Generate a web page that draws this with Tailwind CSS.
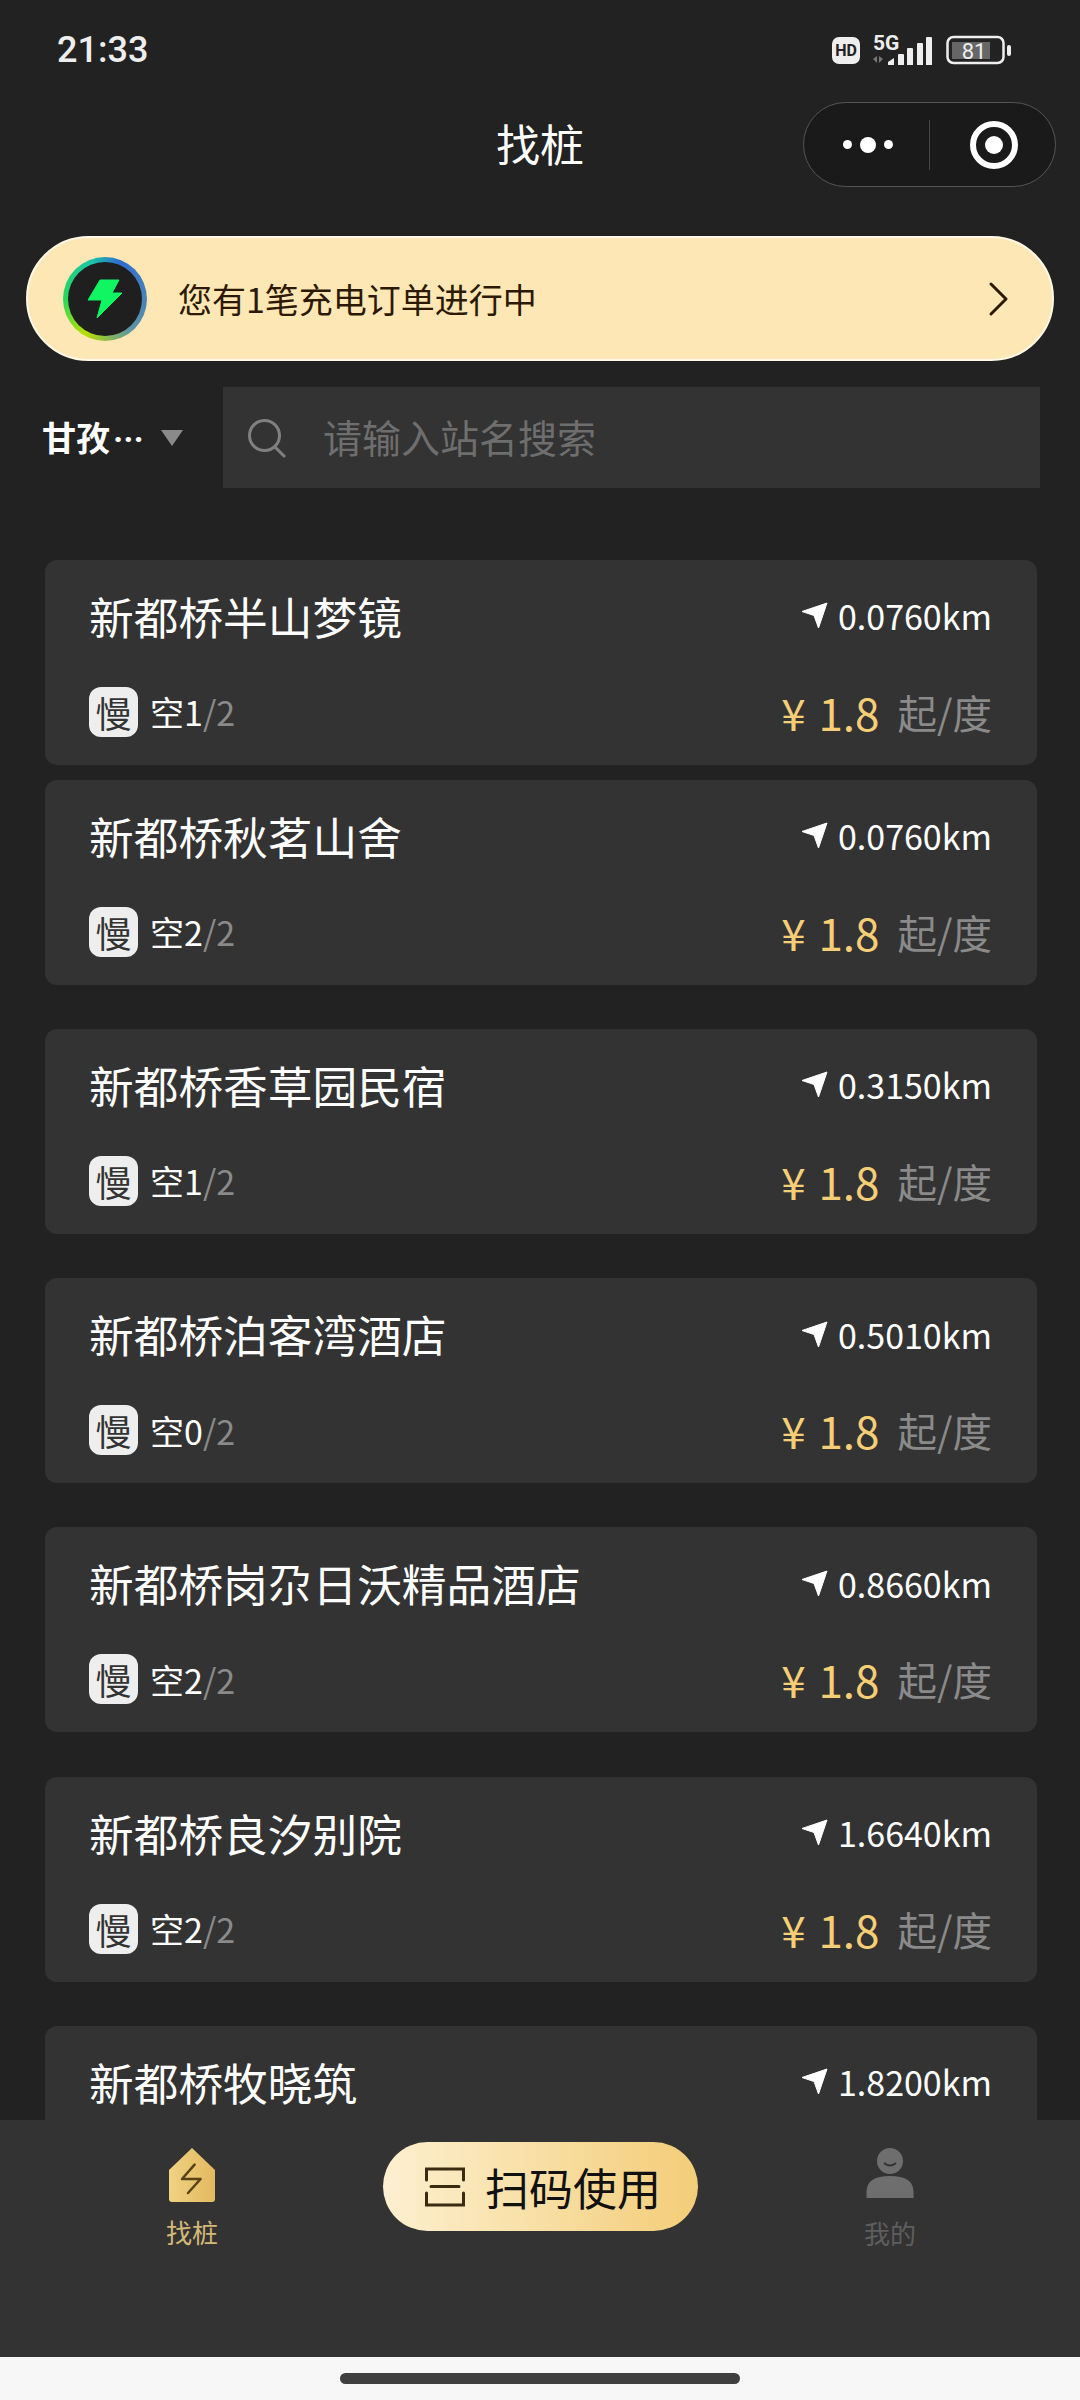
<!DOCTYPE html>
<html lang="zh">
<head>
<meta charset="utf-8">
<script src="https://cdn.jsdelivr.net/npm/@tailwindcss/browser@4"></script>
</head>
<body class="m-0">
<div class="relative w-[1080px] h-[2400px] overflow-hidden bg-[#222222] font-['Noto_Sans_CJK_SC','Noto_Sans',sans-serif] text-white">

  <!-- status bar -->
  <div class="h-[100px] flex items-start justify-between pl-[57px] pr-[68px] pt-[26px]">
    <span class="font-['Roboto'] font-medium text-[36px] leading-[48px] text-[#eeeeee]">21:33</span>
    <div class="flex items-start gap-[13px] pt-[9px]">
      <div class="mt-[2px] w-[28px] h-[27px] rounded-[7px] bg-[#eeeeee] text-[#222222] font-['Roboto'] font-bold text-[16px] leading-[27px] text-center">HD</div>
      <svg class="-mt-[6px]" width="60" height="38" viewBox="0 -6 60 38">
        <text x="0" y="15" font-family="Roboto" font-weight="700" font-size="21" fill="#eeeeee">5G</text>
        <path d="M0 24l4-3v7zM10 24l-4-3v7z" fill="#777777"/>
        <path d="M15 27l6-4v7h-6zM25 20q0-1 1-1h4q1 0 1 1v10h-6zM34 14q0-1 1-1h4q1 0 1 1v16h-6zM44 9q0-1 1-1h4q1 0 1 1v21h-6zM53 3q0-1 1-1h4q1 0 1 1v27h-6z" fill="#eeeeee"/>
      </svg>
      <svg width="66" height="30" viewBox="0 0 66 30">
        <rect x="1.500" y="2" width="56" height="26" rx="6" fill="none" stroke="#eeeeee" stroke-width="2.500"/>
        <rect x="6" y="7" width="38" height="17" fill="#666666"/>
        <rect x="61" y="10" width="4" height="11" rx="2" fill="#eeeeee"/>
        <text x="28" y="23.500" text-anchor="middle" font-family="Roboto" font-size="22" fill="#eeeeee">81</text>
      </svg>
    </div>
  </div>

  <!-- title bar -->
  <div class="relative h-[88px] flex items-center justify-center">
    <span class="text-[44px] leading-[60px] -translate-y-[1px]">找桩</span>
    <div class="absolute left-[803px] top-[2px] w-[253px] h-[85px] rounded-full border border-[#555555] bg-[#1a1a1a] flex items-center">
      <div class="w-[125px] h-full flex items-center justify-center gap-[8px] pl-[3px]">
        <span class="w-[9px] h-[9px] rounded-full bg-white"></span>
        <span class="w-[16px] h-[16px] rounded-full bg-white"></span>
        <span class="w-[9px] h-[9px] rounded-full bg-white"></span>
      </div>
      <div class="w-px h-[50px] bg-[#444444]"></div>
      <div class="flex-1 flex items-center justify-center pl-[2px]">
        <div class="w-[48px] h-[48px] rounded-full border-[6px] border-white flex items-center justify-center">
          <div class="w-[18px] h-[18px] rounded-full bg-white"></div>
        </div>
      </div>
    </div>
  </div>

  <!-- order banner -->
  <div class="mt-[48px] mx-[26px] h-[125px] rounded-full bg-[#fde7b4] border-[2px] border-[#fff8e6] flex items-center pl-[35px] pr-[42px]">
    <div class="w-[84px] h-[84px] rounded-full p-[5px] bg-[conic-gradient(from_20deg,#2f6fd0,#5c93a8_120deg,#b8e000_190deg,#27d85a_250deg,#1cc6a8_320deg,#2f6fd0)] shrink-0">
      <div class="w-full h-full rounded-full bg-[#1f1f1f] flex items-center justify-center">
        <svg width="36" height="40" viewBox="0 0 36 40"><path d="M13 1h19l-7 13h10L10 39l5-18H1z" fill="#10f562" stroke="#10f562" stroke-width="1" stroke-linejoin="round"/></svg>
      </div>
    </div>
    <span class="ml-[31px] text-[34px] leading-[48px] text-[#2d1a05]">您有1笔充电订单进行中</span>
    <svg class="ml-auto" width="22" height="36" viewBox="0 0 22 36"><path d="M3 3l15 15L3 33" fill="none" stroke="#2d1a05" stroke-width="3" stroke-linecap="round" stroke-linejoin="round"/></svg>
  </div>

  <!-- search row -->
  <div class="mt-[26px] pl-[42px] pr-[40px] flex items-center h-[101px]">
    <div class="w-[181px] flex items-center whitespace-nowrap">
      <span class="text-[34px] leading-[50px] font-bold">甘孜<span class="font-['Roboto'] ml-[3px]">···</span></span>
      <svg class="ml-[16px]" width="24" height="18" viewBox="0 0 24 18"><path d="M1 1h22L12 17z" fill="#8a8a8a"/></svg>
    </div>
    <div class="flex-1 h-full bg-[#333333] flex items-center pl-[24px]">
      <svg width="40" height="40" viewBox="0 0 40 40"><circle cx="17.500" cy="17.500" r="15" fill="none" stroke="#808080" stroke-width="3"/><path d="M28 29l9 9" stroke="#808080" stroke-width="3" stroke-linecap="round"/></svg>
      <span class="ml-[36px] text-[39px] leading-[54px] text-[#6e6e6e] -translate-y-[2px]">请输入站名搜索</span>
    </div>
  </div>

  <!-- station list -->
  <div class="mt-[71.500px] ml-[45px] mr-[43px] flex flex-col gap-[44.300px]">
    <div class="flex flex-col gap-[15px]">
      <div class="h-[205px] rounded-[12px] bg-[#333333] pl-[44px] pr-[45px] pt-[25px] flex flex-col">
        <div class="flex items-center justify-between h-[62px]">
          <span class="text-[44.700px] leading-[62px] text-white">新都桥半山梦镜</span>
          <div class="flex items-center gap-[10px] text-[34px]"><svg width="27" height="27" viewBox="0 0 27 27"><path d="M26 1L1 9.500L13 13.500L17.500 26z" fill="#ffffff" stroke="#ffffff" stroke-width="1" stroke-linejoin="round"/></svg><span>0.0760km</span></div>
        </div>
        <div class="mt-[39px] flex items-center h-[52px]">
          <span class="w-[49px] h-[50px] rounded-[12px] bg-[#eeeeee] text-[#333333] text-[36px] leading-[50px] text-center">慢</span>
          <span class="ml-[12px] text-[34px]">空1<span class="text-[#8a8a8a]">/2</span></span>
          <span class="ml-auto text-[44px] leading-[52px] text-[#f6ce76] [word-spacing:3px]">¥ 1.8</span>
          <span class="ml-[18px] text-[39.500px] leading-[52px] text-[#8a8a8a]">起/度</span>
        </div>
      </div>
      <div class="h-[205px] rounded-[12px] bg-[#333333] pl-[44px] pr-[45px] pt-[25px] flex flex-col">
        <div class="flex items-center justify-between h-[62px]">
          <span class="text-[44.700px] leading-[62px] text-white">新都桥秋茗山舍</span>
          <div class="flex items-center gap-[10px] text-[34px]"><svg width="27" height="27" viewBox="0 0 27 27"><path d="M26 1L1 9.500L13 13.500L17.500 26z" fill="#ffffff" stroke="#ffffff" stroke-width="1" stroke-linejoin="round"/></svg><span>0.0760km</span></div>
        </div>
        <div class="mt-[39px] flex items-center h-[52px]">
          <span class="w-[49px] h-[50px] rounded-[12px] bg-[#eeeeee] text-[#333333] text-[36px] leading-[50px] text-center">慢</span>
          <span class="ml-[12px] text-[34px]">空2<span class="text-[#8a8a8a]">/2</span></span>
          <span class="ml-auto text-[44px] leading-[52px] text-[#f6ce76] [word-spacing:3px]">¥ 1.8</span>
          <span class="ml-[18px] text-[39.500px] leading-[52px] text-[#8a8a8a]">起/度</span>
        </div>
      </div>
    </div>
    <div class="h-[205px] rounded-[12px] bg-[#333333] pl-[44px] pr-[45px] pt-[25px] flex flex-col">
      <div class="flex items-center justify-between h-[62px]">
        <span class="text-[44.700px] leading-[62px] text-white">新都桥香草园民宿</span>
        <div class="flex items-center gap-[10px] text-[34px]"><svg width="27" height="27" viewBox="0 0 27 27"><path d="M26 1L1 9.500L13 13.500L17.500 26z" fill="#ffffff" stroke="#ffffff" stroke-width="1" stroke-linejoin="round"/></svg><span>0.3150km</span></div>
      </div>
      <div class="mt-[39px] flex items-center h-[52px]">
        <span class="w-[49px] h-[50px] rounded-[12px] bg-[#eeeeee] text-[#333333] text-[36px] leading-[50px] text-center">慢</span>
        <span class="ml-[12px] text-[34px]">空1<span class="text-[#8a8a8a]">/2</span></span>
        <span class="ml-auto text-[44px] leading-[52px] text-[#f6ce76] [word-spacing:3px]">¥ 1.8</span>
        <span class="ml-[18px] text-[39.500px] leading-[52px] text-[#8a8a8a]">起/度</span>
      </div>
    </div>
    <div class="h-[205px] rounded-[12px] bg-[#333333] pl-[44px] pr-[45px] pt-[25px] flex flex-col">
      <div class="flex items-center justify-between h-[62px]">
        <span class="text-[44.700px] leading-[62px] text-white">新都桥泊客湾酒店</span>
        <div class="flex items-center gap-[10px] text-[34px]"><svg width="27" height="27" viewBox="0 0 27 27"><path d="M26 1L1 9.500L13 13.500L17.500 26z" fill="#ffffff" stroke="#ffffff" stroke-width="1" stroke-linejoin="round"/></svg><span>0.5010km</span></div>
      </div>
      <div class="mt-[39px] flex items-center h-[52px]">
        <span class="w-[49px] h-[50px] rounded-[12px] bg-[#eeeeee] text-[#333333] text-[36px] leading-[50px] text-center">慢</span>
        <span class="ml-[12px] text-[34px]">空0<span class="text-[#8a8a8a]">/2</span></span>
        <span class="ml-auto text-[44px] leading-[52px] text-[#f6ce76] [word-spacing:3px]">¥ 1.8</span>
        <span class="ml-[18px] text-[39.500px] leading-[52px] text-[#8a8a8a]">起/度</span>
      </div>
    </div>
    <div class="h-[205px] rounded-[12px] bg-[#333333] pl-[44px] pr-[45px] pt-[25px] flex flex-col">
      <div class="flex items-center justify-between h-[62px]">
        <span class="text-[44.700px] leading-[62px] text-white">新都桥岗尕日沃精品酒店</span>
        <div class="flex items-center gap-[10px] text-[34px]"><svg width="27" height="27" viewBox="0 0 27 27"><path d="M26 1L1 9.500L13 13.500L17.500 26z" fill="#ffffff" stroke="#ffffff" stroke-width="1" stroke-linejoin="round"/></svg><span>0.8660km</span></div>
      </div>
      <div class="mt-[39px] flex items-center h-[52px]">
        <span class="w-[49px] h-[50px] rounded-[12px] bg-[#eeeeee] text-[#333333] text-[36px] leading-[50px] text-center">慢</span>
        <span class="ml-[12px] text-[34px]">空2<span class="text-[#8a8a8a]">/2</span></span>
        <span class="ml-auto text-[44px] leading-[52px] text-[#f6ce76] [word-spacing:3px]">¥ 1.8</span>
        <span class="ml-[18px] text-[39.500px] leading-[52px] text-[#8a8a8a]">起/度</span>
      </div>
    </div>
    <div class="h-[205px] rounded-[12px] bg-[#333333] pl-[44px] pr-[45px] pt-[25px] flex flex-col">
      <div class="flex items-center justify-between h-[62px]">
        <span class="text-[44.700px] leading-[62px] text-white">新都桥良汐别院</span>
        <div class="flex items-center gap-[10px] text-[34px]"><svg width="27" height="27" viewBox="0 0 27 27"><path d="M26 1L1 9.500L13 13.500L17.500 26z" fill="#ffffff" stroke="#ffffff" stroke-width="1" stroke-linejoin="round"/></svg><span>1.6640km</span></div>
      </div>
      <div class="mt-[39px] flex items-center h-[52px]">
        <span class="w-[49px] h-[50px] rounded-[12px] bg-[#eeeeee] text-[#333333] text-[36px] leading-[50px] text-center">慢</span>
        <span class="ml-[12px] text-[34px]">空2<span class="text-[#8a8a8a]">/2</span></span>
        <span class="ml-auto text-[44px] leading-[52px] text-[#f6ce76] [word-spacing:3px]">¥ 1.8</span>
        <span class="ml-[18px] text-[39.500px] leading-[52px] text-[#8a8a8a]">起/度</span>
      </div>
    </div>
    <div class="h-[205px] rounded-[12px] bg-[#333333] pl-[44px] pr-[45px] pt-[25px] flex flex-col">
      <div class="flex items-center justify-between h-[62px]">
        <span class="text-[44.700px] leading-[62px] text-white">新都桥牧晓筑</span>
        <div class="flex items-center gap-[10px] text-[34px]"><svg width="27" height="27" viewBox="0 0 27 27"><path d="M26 1L1 9.500L13 13.500L17.500 26z" fill="#ffffff" stroke="#ffffff" stroke-width="1" stroke-linejoin="round"/></svg><span>1.8200km</span></div>
      </div>
    </div>
  </div>

  <!-- bottom nav -->
  <div class="absolute left-0 right-0 top-[2120px] h-[237px] bg-[#333333]">
    <div class="relative h-full">
      <div class="absolute left-[140px] top-[28px] w-[104px] flex flex-col items-center">
        <svg width="46" height="54" viewBox="0 0 46 54">
          <defs><linearGradient id="g1" x1="0" y1="0" x2="1" y2="0"><stop offset="0" stop-color="#f0d282"/><stop offset="1" stop-color="#e3b95f"/></linearGradient></defs>
          <path d="M23 0L46 22V51q0 3-3 3H3q-3 0-3-3V22z" fill="url(#g1)"/>
          <path d="M25.600 16.600L13 31H31.600L19 45" fill="none" stroke="#5a4218" stroke-width="2.500" stroke-linecap="round" stroke-linejoin="round"/>
        </svg>
        <span class="mt-[10px] text-[26px] leading-[40px] text-[#d4b878]">找桩</span>
      </div>
      <div class="absolute left-[383px] top-[22px] w-[315px] h-[89px] rounded-full bg-[linear-gradient(90deg,#fdf0d0,#f3cd78)] flex items-center pl-[42px]">
        <svg width="40" height="40" viewBox="0 0 40 40"><path d="M1.500 13V2H38.500V13M6 19.500H34M38.500 26V38H1.500V26" fill="none" stroke="#3a2c12" stroke-width="3" stroke-linecap="round"/></svg>
        <span class="ml-[20px] text-[44px] leading-[60px] text-[#111111]">扫码使用</span>
      </div>
      <div class="absolute left-[838px] top-[28px] w-[104px] flex flex-col items-center">
        <svg width="50" height="52" viewBox="0 0 50 52">
          <circle cx="25" cy="13" r="13" fill="#6e6e6e"/>
          <path d="M19 15q6 5 12 0" fill="none" stroke="#333333" stroke-width="2"/>
          <path d="M1.500 50V43Q2 28 25 28T48.500 43V50z" fill="#6e6e6e"/>
        </svg>
        <span class="mt-[13px] text-[26px] leading-[40px] text-[#5e5e5e]">我的</span>
      </div>
    </div>
  </div>

  <!-- home indicator -->
  <div class="absolute left-0 right-0 top-[2357px] h-[43px] bg-[#f7f7f7] flex justify-center pt-[16px]">
    <div class="w-[400px] h-[11px] rounded-full bg-[#3f3f3f]"></div>
  </div>
</div>
</body>
</html>
